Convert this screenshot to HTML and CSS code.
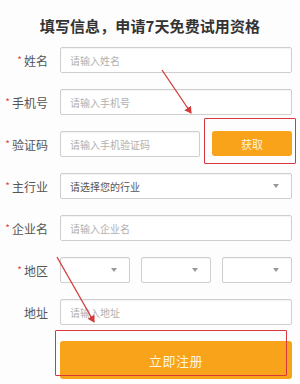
FILE: index.html
```html
<!DOCTYPE html>
<html lang="zh">
<head>
<meta charset="utf-8">
<link rel="stylesheet" href="styles.css">
</head>
<body>
<div class="page">
  <h1 class="title">填写信息，申请7天免费试用资格</h1>
  <form class="form">
    <div class="row">
      <label class="label"><span class="req">*</span>姓名</label>
      <div class="field input"><span class="ph">请输入姓名</span></div>
    </div>
    <div class="row">
      <label class="label"><span class="req">*</span>手机号</label>
      <div class="field input"><span class="ph">请输入手机号</span></div>
    </div>
    <div class="row">
      <label class="label"><span class="req">*</span>验证码</label>
      <div class="code">
        <div class="field input"><span class="ph">请输入手机验证码</span></div>
        <div class="get-btn">获取</div>
      </div>
    </div>
    <div class="row">
      <label class="label"><span class="req">*</span>主行业</label>
      <div class="field input select"><span class="val">请选择您的行业</span><span class="caret"></span></div>
    </div>
    <div class="row">
      <label class="label"><span class="req">*</span>企业名</label>
      <div class="field input"><span class="ph">请输入企业名</span></div>
    </div>
    <div class="row">
      <label class="label"><span class="req">*</span>地区</label>
      <div class="region">
        <div class="input select"><span class="caret"></span></div>
        <div class="input select"><span class="caret"></span></div>
        <div class="input select"><span class="caret"></span></div>
      </div>
    </div>
    <div class="row">
      <label class="label">地址</label>
      <div class="field input"><span class="ph">请输入地址</span></div>
    </div>
    <div class="row submit-row">
      <span class="label"></span>
      <div class="submit">立即注册</div>
    </div>
  </form>

  <div class="mark mark-get"></div>
  <div class="mark mark-submit"></div>
  <svg class="arrows" width="300" height="384" viewBox="0 0 300 384">
    <defs>
      <marker id="ah" markerWidth="8" markerHeight="8" refX="6" refY="4" orient="auto" markerUnits="userSpaceOnUse">
        <path d="M0,0 L7,4 L0,8 Z" fill="#d23a3a"/>
      </marker>
    </defs>
    <line x1="162" y1="70" x2="191" y2="113" stroke="#d23a3a" stroke-width="1.3" marker-end="url(#ah)"/>
    <line x1="57" y1="257" x2="94" y2="322" stroke="#d23a3a" stroke-width="1.3" marker-end="url(#ah)"/>
  </svg>
</div>
</body>
</html>
```
FILE: styles.css
```css
* { box-sizing: border-box; }
html, body { margin: 0; padding: 0; background: #fdfdfd; }
body {
  font-family: "Noto Sans CJK SC", "Liberation Sans", sans-serif;
  color: #444;
}
.page {
  position: relative;
  width: 300px;
  height: 384px;
  overflow: hidden;
  padding-top: 16px;
}
.title {
  margin: 0 0 11px;
  text-align: center;
  font-size: 15px;
  line-height: 20px;
  font-weight: 700;
  color: #333;
  letter-spacing: 0.1px;
}
.form {
  display: flex;
  flex-direction: column;
  gap: 16px;
  padding-right: 8px;
}
.row {
  display: flex;
  align-items: center;
  gap: 12px;
  height: 26px;
}
.label {
  width: 48px;
  flex: none;
  text-align: right;
  font-size: 12px;
  color: #555;
  white-space: nowrap;
}
.req {
  color: #e04848;
  font-size: 10px;
  margin-right: 2px;
  vertical-align: 2px;
}
.input {
  height: 26px;
  border: 1px solid #cfcfcf;
  border-radius: 2px;
  background: #fff;
  box-shadow: inset 0 1px 1px rgba(0,0,0,0.05);
  display: flex;
  align-items: center;
  padding: 0 9px;
  font-size: 10px;
}
.field { flex: 1; }
.ph { color: #b0b0b0; }
.val { color: #555; font-size: 10px; }
.select { justify-content: space-between; position: relative; }
.caret {
  margin-left: auto;
  width: 0;
  height: 0;
  border-left: 3.5px solid transparent;
  border-right: 3.5px solid transparent;
  border-top: 4px solid #999;
  margin-right: 3px;
}
.code {
  flex: 1;
  display: flex;
  gap: 12px;
}
.code .field { flex: none; width: 140px; }
.get-btn {
  flex: 1;
  height: 25px;
  margin-top: 0;
  background: #f8a31a;
  border-radius: 3px;
  color: #fff3dc;
  font-size: 11px;
  display: flex;
  align-items: center;
  justify-content: center;
}
.region {
  flex: 1;
  display: grid;
  grid-template-columns: repeat(3, 1fr);
  gap: 11px;
}
.submit-row { height: 38px; }
.submit {
  flex: 1;
  height: 38px;
  background: #f8a31a;
  border-radius: 3px;
  color: #fff4de;
  font-size: 13px;
  display: flex;
  align-items: center;
  justify-content: center;
  letter-spacing: 0.5px;
}
.mark {
  position: absolute;
  border: 1.5px solid #d8373f;
  border-radius: 1px;
}
.mark-get { left: 204px; top: 118px; width: 92px; height: 46px; }
.mark-submit { left: 55px; top: 330px; width: 232px; height: 46px; }
.arrows {
  position: absolute;
  left: 0;
  top: 0;
  pointer-events: none;
}
```
